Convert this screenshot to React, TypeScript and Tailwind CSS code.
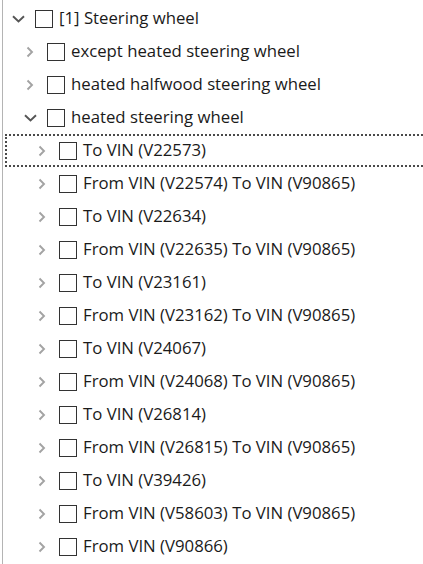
import React from "react";

type Node = {
  label: string;
  level: number;
  open?: boolean;
  focused?: boolean;
};

const nodes: Node[] = [
  { label: "[1] Steering wheel", level: 0, open: true },
  { label: "except heated steering wheel", level: 1 },
  { label: "heated halfwood steering wheel", level: 1 },
  { label: "heated steering wheel", level: 1, open: true },
  { label: "To VIN (V22573)", level: 2, focused: true },
  { label: "From VIN (V22574) To VIN (V90865)", level: 2 },
  { label: "To VIN (V22634)", level: 2 },
  { label: "From VIN (V22635) To VIN (V90865)", level: 2 },
  { label: "To VIN (V23161)", level: 2 },
  { label: "From VIN (V23162) To VIN (V90865)", level: 2 },
  { label: "To VIN (V24067)", level: 2 },
  { label: "From VIN (V24068) To VIN (V90865)", level: 2 },
  { label: "To VIN (V26814)", level: 2 },
  { label: "From VIN (V26815) To VIN (V90865)", level: 2 },
  { label: "To VIN (V39426)", level: 2 },
  { label: "From VIN (V58603) To VIN (V90865)", level: 2 },
  { label: "From VIN (V90866)", level: 2 },
];

const indent = ["pl-0", "pl-[12px]", "pl-[24px]"];

function Chevron({ open }: { open?: boolean }) {
  if (open) {
    return (
      <svg width="13" height="8" viewBox="0 0 13 8" fill="none">
        <path d="M1 1.2 L6.5 6.5 L12 1.2" stroke="#555555" strokeWidth="1.9" />
      </svg>
    );
  }
  return (
    <svg width="8" height="12" viewBox="0 0 8 12" fill="none">
      <path d="M1.5 1.5 L6 6 L1.5 10.5" stroke="#a3a3a3" strokeWidth="1.9" />
    </svg>
  );
}

function TreeRow({ node }: { node: Node }) {
  return (
    <div
      className={`relative flex h-[33px] w-[440px] items-center ${indent[node.level]}`}
    >
      {node.focused && (
        <div className="absolute inset-0 left-[2px] border-2 border-dotted border-[#4a4a4a]" />
      )}
      <div className="flex w-[30px] shrink-0 items-center justify-center">
        <Chevron open={node.open} />
      </div>
      <div className="ml-[2px] h-[18px] w-[18px] shrink-0 border-[1.5px] border-[#333333] bg-white" />
      <span className="ml-[6px] whitespace-nowrap text-[16.75px] leading-none text-[#1a1a1a]">
        {node.label}
      </span>
    </div>
  );
}

export default function App() {
  return (
    <div
      className="h-[564px] w-[423px] overflow-hidden bg-white pl-[2px]"
      style={{ fontFamily: '"Open Sans", "Noto Sans", sans-serif' }}
    >
      <div className="h-full border-l border-[#b4b4b4] pt-[2px]">
        {nodes.map((n, i) => (
          <TreeRow key={i} node={n} />
        ))}
      </div>
    </div>
  );
}
